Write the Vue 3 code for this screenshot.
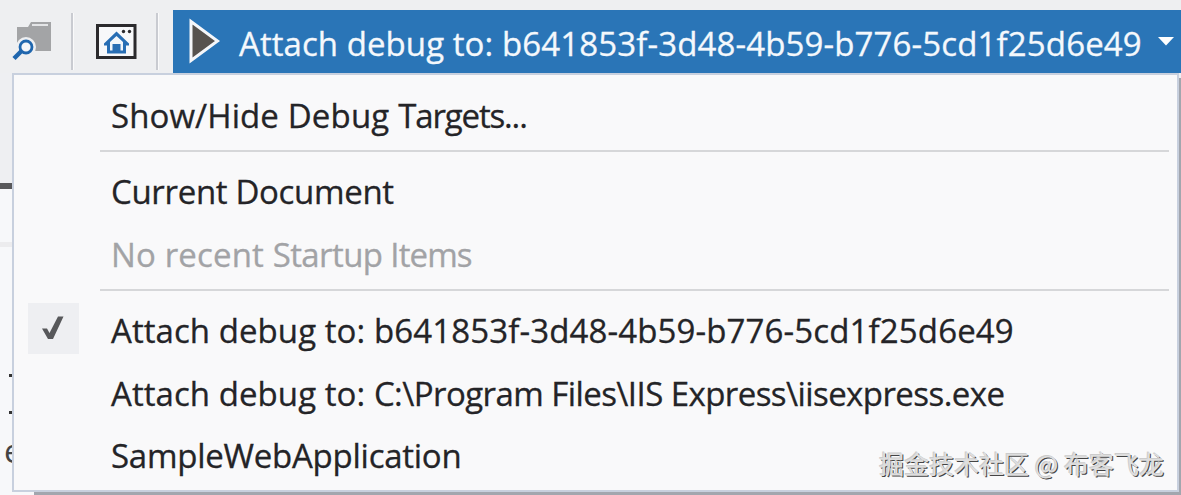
<script setup>
import { ref } from "vue";

const prefix = { text: "Attach debug to: ", spacing: 0.06 };
const target = { text: "b641853f-3d48-4b59-b776-5cd1f25d6e49", spacing: 0.13 };

const groups = ref([
  [
    {
      parts: [
        { text: "Show/Hide ", spacing: 0.08 },
        { text: "Debug ", spacing: 0.2 },
        { text: "Targets...", spacing: -1.15 },
      ],
    },
  ],
  [
    { parts: [{ text: "Current Document", spacing: -0.33 }] },
    {
      parts: [
        { text: "No recent ", spacing: 0.15 },
        { text: "Startup ", spacing: -0.6 },
        { text: "Items", spacing: -0.9 },
      ],
      disabled: true,
    },
  ],
  [
    { parts: [prefix, target], checked: true },
    {
      parts: [prefix, { text: "C:\\Program Files\\IIS Express\\iisexpress.exe", spacing: -0.57 }],
    },
    { parts: [{ text: "SampleWebApplication", spacing: -0.25 }] },
  ],
]);
</script>

<template>
  <div class="window">
    <div class="toolbar">
      <svg class="icon-find" width="44" height="46" viewBox="0 0 44 46">
        <path d="M7 7h11l3-5h20v29H7z" fill="#a3a4a6" />
        <path d="M22 5h16" stroke="#e4e5e7" stroke-width="2" />
        <circle cx="16" cy="27" r="10" fill="#eeeff1" />
        <path d="M11.500 31 4 38.500" stroke="#1f66ae" stroke-width="4.500" />
        <circle cx="16" cy="27" r="6" fill="#f3f5f8" stroke="#1f66ae" stroke-width="2.800" />
      </svg>
      <span class="divider"></span>
      <svg class="icon-home" width="42" height="36" viewBox="0 0 42 36">
        <rect x="1.500" y="1.500" width="37.500" height="32" fill="#f7f8fa" stroke="#2b2a2d" stroke-width="3" />
        <circle cx="27.500" cy="7.500" r="1.700" fill="#2b2a2d" />
        <circle cx="33.500" cy="7.500" r="1.700" fill="#2b2a2d" />
        <path d="M20.500 7.500 33 19.500v2h-3v8H11v-8H8v-2z" fill="#286eb4" />
        <path d="M20.500 12 27 18v8.500h-2.500V20h-8v6.500H14V18z" fill="#f3f6fa" />
        <path d="M17.500 20.500h6v6h-6z" fill="#286eb4" />
      </svg>
      <span class="divider second"></span>
      <div class="run">
        <svg class="icon-play" width="34" height="48" viewBox="0 0 34 48">
          <path d="M3 4.500v39L29.500 24z" fill="#57534f" stroke="#f5f7fa" stroke-width="3" />
        </svg>
        <span class="run-label">
          <span v-for="part in [prefix, target]" :key="part.text" :style="{ letterSpacing: part.spacing + 'px' }">{{ part.text }}</span>
        </span>
        <svg class="icon-caret" width="17" height="9" viewBox="0 0 17 9">
          <path d="M0 0h16L8 8.500z" fill="#fff" />
        </svg>
      </div>
    </div>

    <div class="editor">
      <div class="editor-tab"></div>
      <div class="editor-bar"></div>
      <div class="editor-line"></div>
      <span class="dot"></span>
      <span class="dot lower"></span>
      <span class="code">e</span>
    </div>

    <div class="menu">
      <template v-for="(group, g) in groups" :key="g">
        <div v-if="g > 0" class="separator"></div>
        <div v-for="(item, i) in group" :key="i" class="item" :class="{ disabled: item.disabled }">
          <span v-if="item.checked" class="check">
            <svg width="24" height="26" viewBox="0 0 24 26">
              <path d="M1 13.500h5l2.500 4.500L17 1.500h5.500L12 24H7z" fill="#57585b" />
            </svg>
          </span>
          <span class="label">
            <span v-for="part in item.parts" :key="part.text" :style="{ letterSpacing: part.spacing + 'px' }">{{ part.text }}</span>
          </span>
        </div>
      </template>
    </div>

    <div class="watermark">掘金技术社区 @ 布客飞龙</div>
  </div>
</template>

<style>
body {
  margin: 0;
  overflow: hidden;
}
</style>

<style scoped>
.window {
  position: relative;
  width: 1181px;
  height: 495px;
  overflow: hidden;
  background: #f7f8fa;
  font-family: "Open Sans", "Noto Sans", sans-serif;
  font-size: 33px;
  color: #242427;
}

.toolbar {
  display: flex;
  height: 73px;
  background: #eeeff1;
}

.icon-find {
  flex: none;
  margin: 20px 0 0 10px;
}

.divider {
  flex: none;
  width: 2px;
  height: 57px;
  margin: 13px 0 0 17px;
  background: #c9cbd1;
  border-right: 1px solid #fafafb;
}

.divider.second {
  margin-left: 18px;
}

.icon-home {
  flex: none;
  margin: 24px 0 0 22px;
}

.run {
  display: flex;
  flex: 1;
  height: 63px;
  margin: 10px 0 0 14px;
  background: #2a75b7;
  color: #f4f8fc;
}

.icon-play {
  flex: none;
  margin: 7px 0 0 15px;
}

.run-label {
  box-sizing: border-box;
  display: flex;
  width: 919px;
  height: 63px;
  margin-left: 17px;
  padding-top: 2px;
  line-height: 63px;
  white-space: pre;
  -webkit-text-stroke: 0.3px currentColor;
}

.icon-caret {
  flex: none;
  margin-top: 27px;
}

.editor {
  position: relative;
  height: 422px;
}

.editor-tab {
  height: 110px;
  background: #eeeff2;
}

.editor-bar {
  height: 6px;
  background: #58585b;
}

.editor-line {
  height: 5px;
  margin-top: 53px;
  background: #ececee;
}

.dot {
  position: absolute;
  top: 301px;
  left: 9px;
  width: 3px;
  height: 3px;
  background: #333;
}

.dot.lower {
  top: 338px;
}

.code {
  position: absolute;
  top: 355px;
  left: 4px;
  color: #444;
}

.menu {
  position: absolute;
  top: 73px;
  left: 12px;
  box-sizing: border-box;
  width: 1167px;
  height: 419px;
  padding-top: 9.5px;
  background: #f9f9fa;
  border: 2px solid #c8d0de;
  box-shadow: 22px 5px 0 #a2a6ae;
}

.item {
  display: flex;
  align-items: center;
  position: relative;
  height: 62.5px;
  padding-left: 97px;
}

.label {
  display: flex;
  margin-top: -1px;
  white-space: pre;
  -webkit-text-stroke: 0.3px currentColor;
}

.disabled {
  color: #a2a3a6;
}

.separator {
  height: 2px;
  margin: 3px 8px 9px 86px;
  background: #d6d7d9;
}

.check {
  position: absolute;
  top: 3px;
  left: 14px;
  display: flex;
  align-items: center;
  justify-content: center;
  width: 51px;
  height: 51px;
  background: #eeeff2;
}

.check svg {
  margin: 0 2px 2px 0;
}

.watermark {
  position: absolute;
  right: 17px;
  bottom: 14px;
  font-family: "Noto Sans CJK SC", "Noto Sans", sans-serif;
  font-size: 25px;
  line-height: 36px;
  color: #dedede;
  text-shadow: -1px -1px 0 #ccc, 1px 1px 0 #444;
  white-space: nowrap;
}
</style>
